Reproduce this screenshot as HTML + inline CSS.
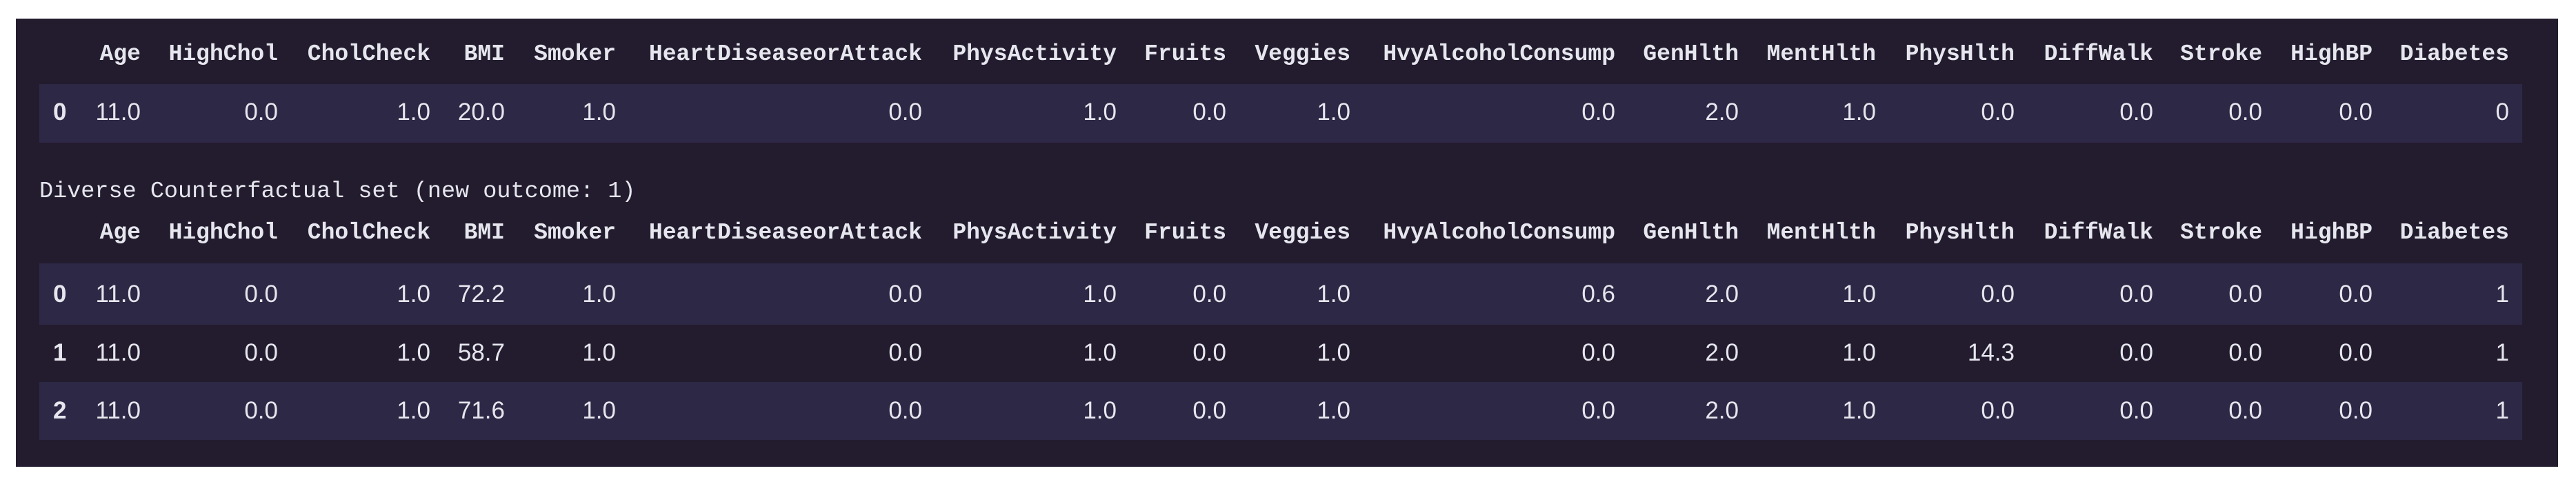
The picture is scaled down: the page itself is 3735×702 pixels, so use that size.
<!DOCTYPE html>
<html><head><meta charset="utf-8"><style>
html,body{margin:0;padding:0;background:#fff;}
body{width:3735px;height:702px;position:relative;overflow:hidden;}
#p{position:absolute;left:23px;top:27px;width:3686px;height:650px;background:#231c2e;}
.b{position:absolute;left:57px;width:3600px;background:#2d2845;}
.t{position:absolute;height:60px;line-height:60px;white-space:nowrap;color:#e6e6ee;text-align:right;}
.h{font-family:"Liberation Mono",monospace;font-weight:bold;font-size:33px;}
.v{font-family:"Liberation Sans",sans-serif;font-size:35px;}
.i{font-family:"Liberation Sans",sans-serif;font-weight:bold;font-size:35px;}
.c{position:absolute;left:57px;height:60px;line-height:60px;font-family:"Liberation Mono",monospace;font-size:33.5px;color:#e6e6ee;white-space:nowrap;}
</style></head><body>
<div id="p"></div>
<div class="b" style="top:122px;height:85px"></div>
<div class="b" style="top:382px;height:89px"></div>
<div class="b" style="top:554px;height:84px"></div>
<div class="c" style="top:248px">Diverse Counterfactual set (new outcome: 1)</div>
<div id="g"></div>
<script>
const R=[204,403,624,732,893,1337,1619,1778,1958,2342,2521,2720,2921,3122,3280,3440,3638];
const H=["Age","HighChol","CholCheck","BMI","Smoker","HeartDiseaseorAttack","PhysActivity","Fruits","Veggies","HvyAlcoholConsump","GenHlth","MentHlth","PhysHlth","DiffWalk","Stroke","HighBP","Diabetes"];
const rows=[
[79,H,"h",null],
[163,["11.0","0.0","1.0","20.0","1.0","0.0","1.0","0.0","1.0","0.0","2.0","1.0","0.0","0.0","0.0","0.0","0"],"v","0"],
[338,H,"h",null],
[427,["11.0","0.0","1.0","72.2","1.0","0.0","1.0","0.0","1.0","0.6","2.0","1.0","0.0","0.0","0.0","0.0","1"],"v","0"],
[512,["11.0","0.0","1.0","58.7","1.0","0.0","1.0","0.0","1.0","0.0","2.0","1.0","14.3","0.0","0.0","0.0","1"],"v","1"],
[596,["11.0","0.0","1.0","71.6","1.0","0.0","1.0","0.0","1.0","0.0","2.0","1.0","0.0","0.0","0.0","0.0","1"],"v","2"]];
let s="";
for(const [y,cells,cls,idx] of rows){
 const top = y-30;
 cells.forEach((c,k)=>{s+=`<div class="t ${cls}" style="top:${top}px;right:${3735-R[k]}px">${c}</div>`;});
 if(idx!==null) s+=`<div class="t i" style="top:${top}px;left:77px;text-align:left">${idx}</div>`;
}
document.getElementById("g").innerHTML=s;
</script>
</body></html>
